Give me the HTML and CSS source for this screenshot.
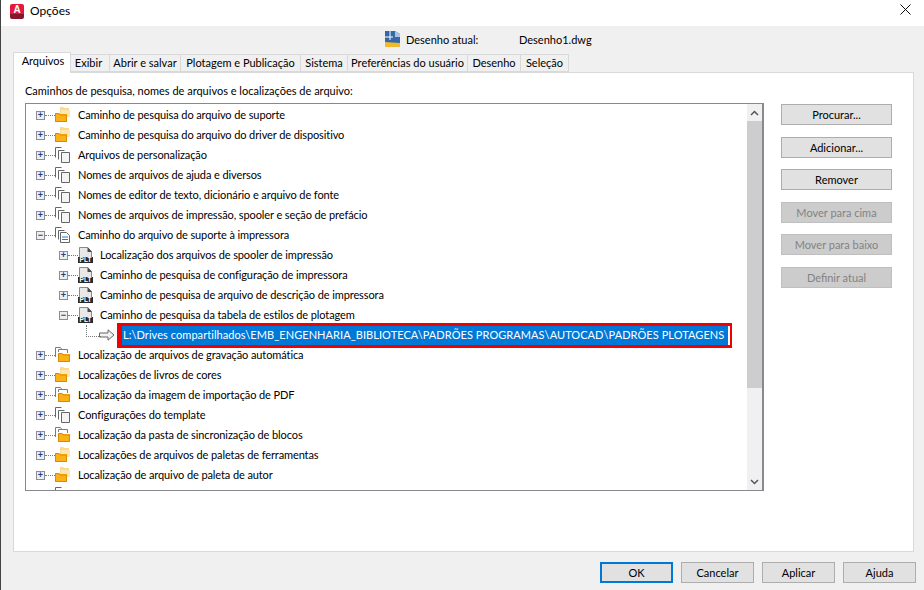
FILE: index.html
```html
<!DOCTYPE html>
<html lang="pt">
<head>
<meta charset="utf-8">
<title>Opções</title>
<link rel="stylesheet" href="styles.css">
</head>
<body>
<svg class="defs" width="0" height="0" aria-hidden="true">
  <symbol id="i-folders" viewBox="0 0 16 16">
    <path d="M5 0h3l1 1h5v8H5z" fill="#fbd98e"/>
    <path d="M6 3h9v7H6z" fill="#fde6b5"/>
    <path d="M0 6h4l1 1h7v8H0z" fill="#fdb119"/>
    <path d="M.5 6.500h3.500l1 1.500h6.500v6.500H.5z" fill="none" stroke="#d98c00"/>
  </symbol>
  <symbol id="i-mixed" viewBox="0 0 16 16">
    <path d="M.5 10V.5h5l1 1.500M.5 .5" fill="none" stroke="#7a7a7a"/>
    <path d="M3.500 5V2.500h9V6" fill="none" stroke="#7a7a7a"/>
    <path d="M3 6h4l1 1h7v8H3z" fill="#fdb119"/>
    <path d="M3.500 6.500h3.500l1 1.500h6.500v6.500h-11z" fill="none" stroke="#d98c00"/>
  </symbol>
  <symbol id="i-pages" viewBox="0 0 16 16">
    <path d="M.5 10.500V.5h6M3.500 12.500V3.500h6" fill="none" stroke="#666"/>
    <path d="M6.500 5.500h8v10h-8z" fill="#f4f4f4" stroke="#666"/>
  </symbol>
  <symbol id="i-pages-doc" viewBox="0 0 16 16">
    <path d="M.5 10.500V.5h6M3.500 12.500V3.500h6" fill="none" stroke="#666"/>
    <path d="M5.500 5.500h6l3 3v7h-9z" fill="#fff" stroke="#666"/>
    <path d="M7 10h6M7 12.500h6" stroke="#1e7fd0"/>
  </symbol>
  <symbol id="i-plt" viewBox="0 0 15 16">
    <path d="M1 0h9l4 4v6H1z" fill="#e8e8e8"/>
    <path d="M1.500 .5h8l4 4V10M1.500 .5V10" fill="none" stroke="#8a8a8a"/>
    <path d="M9.500 0v5H14z" fill="#4a4a4a"/>
    <path d="M0 10h15v6H0z" fill="#2b2b2b"/>
  </symbol>
</svg>
<div class="window">
  <header class="titlebar">
    <span class="app-logo">A</span>
    <span class="title">Opções</span>
    <svg class="close" viewBox="0 0 11 11" width="11" height="11"><path d="M.5 .5l10 10M10.500 .5l-10 10" stroke="#111" fill="none"/></svg>
  </header>
  <div class="current">
    <svg class="dwg-icon" viewBox="0 0 15 16" width="15" height="16">
      <path d="M0 0h10l5 3v13H0z" fill="#3269a6"/>
      <path d="M10 0l5 3v3h-5z" fill="#a9c4e4"/>
      <path d="M0 11l15 1v4H0z" fill="#f2b92b"/>
      <path d="M0 6h8M5 0v9" stroke="#fff"/>
    </svg>
    <span class="current-label">Desenho atual:</span>
    <span class="current-name">Desenho1.dwg</span>
  </div>
  <nav class="tabs">
    <span class="tab active">Arquivos</span>
    <span class="tab t-exibir">Exibir</span>
    <span class="tab t-abrir">Abrir e salvar</span>
    <span class="tab t-plot">Plotagem e Publicação</span>
    <span class="tab t-sis">Sistema</span>
    <span class="tab t-pref">Preferências do usuário</span>
    <span class="tab t-des">Desenho</span>
    <span class="tab t-sel">Seleção</span>
  </nav>
  <main class="panel">
    <p class="caption">Caminhos de pesquisa, nomes de arquivos e localizações de arquivo:</p>
    <div class="content">
      <div class="listbox">
        <ul class="tree">
          <li class="row"><span class="exp">+</span><svg class="ico"><use href="#i-folders"/></svg><span class="txt">Caminho de pesquisa do arquivo de suporte</span></li>
          <li class="row"><span class="exp">+</span><svg class="ico"><use href="#i-folders"/></svg><span class="txt">Caminho de pesquisa do arquivo do driver de dispositivo</span></li>
          <li class="row"><span class="exp">+</span><svg class="ico"><use href="#i-pages"/></svg><span class="txt">Arquivos de personalização</span></li>
          <li class="row"><span class="exp">+</span><svg class="ico"><use href="#i-pages"/></svg><span class="txt">Nomes de arquivos de ajuda e diversos</span></li>
          <li class="row"><span class="exp">+</span><svg class="ico"><use href="#i-pages"/></svg><span class="txt">Nomes de editor de texto, dicionário e arquivo de fonte</span></li>
          <li class="row"><span class="exp">+</span><svg class="ico"><use href="#i-pages"/></svg><span class="txt">Nomes de arquivos de impressão, spooler e seção de prefácio</span></li>
          <li class="row"><span class="exp">−</span><svg class="ico"><use href="#i-pages-doc"/></svg><span class="txt">Caminho do arquivo de suporte à impressora</span></li>
          <li class="row child"><span class="exp">+</span><svg class="ico plt" viewBox="0 0 15 16"><use href="#i-plt"/><text x="7.500" y="15" class="plt-text" text-anchor="middle">PLT</text></svg><span class="txt">Localização dos arquivos de spooler de impressão</span></li>
          <li class="row child"><span class="exp">+</span><svg class="ico plt" viewBox="0 0 15 16"><use href="#i-plt"/><text x="7.500" y="15" class="plt-text" text-anchor="middle">PLT</text></svg><span class="txt">Caminho de pesquisa de configuração de impressora</span></li>
          <li class="row child"><span class="exp">+</span><svg class="ico plt" viewBox="0 0 15 16"><use href="#i-plt"/><text x="7.500" y="15" class="plt-text" text-anchor="middle">PLT</text></svg><span class="txt">Caminho de pesquisa de arquivo de descrição de impressora</span></li>
          <li class="row child"><span class="exp">−</span><svg class="ico plt" viewBox="0 0 15 16"><use href="#i-plt"/><text x="7.500" y="15" class="plt-text" text-anchor="middle">PLT</text></svg><span class="txt">Caminho de pesquisa da tabela de estilos de plotagem</span></li>
          <li class="row leaf">
            <svg class="arrow" viewBox="0 0 16 12" width="16" height="12"><path d="M.5 4h8.500V.8L15 6l-6 5.200V8H.5z" fill="#f2f2f2" stroke="#666"/></svg>
            <span class="selected">L:\Drives compartilhados\EMB_ENGENHARIA_BIBLIOTECA\PADRÕES PROGRAMAS\AUTOCAD\PADRÕES PLOTAGENS</span>
          </li>
          <li class="row"><span class="exp">+</span><svg class="ico"><use href="#i-mixed"/></svg><span class="txt">Localização de arquivos de gravação automática</span></li>
          <li class="row"><span class="exp">+</span><svg class="ico"><use href="#i-folders"/></svg><span class="txt">Localizações de livros de cores</span></li>
          <li class="row"><span class="exp">+</span><svg class="ico"><use href="#i-mixed"/></svg><span class="txt">Localização da imagem de importação de PDF</span></li>
          <li class="row"><span class="exp">+</span><svg class="ico"><use href="#i-pages"/></svg><span class="txt">Configurações do template</span></li>
          <li class="row"><span class="exp">+</span><svg class="ico"><use href="#i-mixed"/></svg><span class="txt">Localização da pasta de sincronização de blocos</span></li>
          <li class="row"><span class="exp">+</span><svg class="ico"><use href="#i-folders"/></svg><span class="txt">Localizações de arquivos de paletas de ferramentas</span></li>
          <li class="row"><span class="exp">+</span><svg class="ico"><use href="#i-folders"/></svg><span class="txt">Localização de arquivo de paleta de autor</span></li>
          <li class="row"><span class="exp"></span><svg class="ico"><use href="#i-pages"/></svg></li>
        </ul>
        <div class="scrollbar">
          <span class="sb-btn"><svg viewBox="0 0 9 6" width="9" height="6"><path d="M1 5l3.500-3.500L8 5" fill="none" stroke="#555" stroke-width="1.500"/></svg></span>
          <span class="sb-thumb"></span>
          <span class="sb-track"></span>
          <span class="sb-btn"><svg viewBox="0 0 9 6" width="9" height="6"><path d="M1 1l3.500 3.500L8 1" fill="none" stroke="#555" stroke-width="1.500"/></svg></span>
        </div>
      </div>
      <aside class="actions">
        <button class="btn side">Procurar...</button>
        <button class="btn side">Adicionar...</button>
        <button class="btn side">Remover</button>
        <button class="btn side off">Mover para cima</button>
        <button class="btn side off">Mover para baixo</button>
        <button class="btn side off">Definir atual</button>
      </aside>
    </div>
  </main>
  <footer class="footer">
    <button class="btn foot default">OK</button>
    <button class="btn foot">Cancelar</button>
    <button class="btn foot">Aplicar</button>
    <button class="btn foot">Ajuda</button>
  </footer>
</div>
</body>
</html>
```
FILE: styles.css
```css
* { box-sizing: border-box; }
html, body { margin: 0; padding: 0; }
body {
  width: 924px;
  height: 590px;
  overflow: hidden;
  font-family: Lato, "Open Sans", sans-serif;
  font-size: 11px;
  color: #000;
  background: #f0f0f0;
}
.defs { position: absolute; }
.plt-text { font: bold 6.500px "Liberation Sans", sans-serif; fill: #fff; }
.window { height: 590px; display: flex; flex-direction: column; border-left: 1px solid #444; }

.titlebar { height: 26px; background: #fff; display: flex; align-items: center; flex: none; }
.app-logo {
  width: 14px; height: 15px; margin-left: 9px; margin-top: -3px;
  background: linear-gradient(#e5173f 0 70%, #85182c 70%);
  border-radius: 2px;
  color: #fff; font: bold 10px/11px "Liberation Sans", sans-serif; text-align: center;
}
.title { margin-left: 6px; margin-top: -5px; font-size: 12px; }
.close { margin-left: auto; margin-right: 13px; margin-top: -8px; }

.current { height: 26px; display: flex; align-items: center; flex: none; padding-left: 384px; }
.current-label { margin-left: 6px; width: 113px; }

.tabs { height: 20px; display: flex; align-items: flex-end; padding-left: 12px; flex: none; position: relative; z-index: 1; }
.tab {
  height: 18px; padding-top: 1px; text-align: center; white-space: nowrap;
  background: #f0f0f0;
  border: 1px solid #d9d9d9; border-left: 0;
}
.tab.active { width: 58px; height: 21px; margin-bottom: -1px; padding: 1px 0 0 2px; background: #fff; border-left: 1px solid #d9d9d9; border-bottom: 0; }
.t-exibir { width: 39px; padding-right: 3px; }
.t-abrir { width: 71px; }
.t-plot { width: 120px; }
.t-sis { width: 47px; }
.t-pref { width: 120px; }
.t-des { width: 53px; }
.t-sel { width: 48px; }

.panel { width: 901px; height: 480px; margin-left: 12px; background: #fff; border: 1px solid #d9d9d9; flex: none; padding: 11px 11px 0; }
.caption { margin: 0; height: 19px; line-height: 14px; }
.content { display: flex; align-items: flex-start; }
.listbox { width: 739px; height: 388px; border: 1px solid #868a8f; border-right-width: 2px; display: flex; overflow: hidden; }

.tree { list-style: none; margin: 0; padding: 1px 0 0; flex: 1; overflow: hidden; height: 386px; background-image: radial-gradient(#777 .6px, transparent .7px); background-size: 2px 2px; background-position: 14px 0; background-repeat: repeat-y; }
.row { height: 20px; display: flex; align-items: center; padding-left: 10px; white-space: nowrap; position: relative; }
.exp {
  width: 9px; height: 9px; flex: none;
  border: 1px solid #8d8d8d; background: #eee;
  color: #1d3f8f; font: bold 9px/7px "Liberation Sans", sans-serif; text-align: center;
  position: relative;
}
.exp::after { content: ""; position: absolute; left: 8px; top: 3px; width: 10px; border-top: 1px dotted #777; }
.ico { width: 16px; height: 16px; margin-left: 10px; flex: none; }
.txt { margin-left: 7px; padding-bottom: 1px; letter-spacing: -0.1px; }
.row.child { padding-left: 33px; background-image: radial-gradient(#777 .6px, transparent .7px); background-size: 2px 2px; background-position: 37px 0; background-repeat: repeat-y; }
.ico.plt { width: 15px; margin-left: 10px; }
.child .txt { margin-left: 7px; }
.row.leaf { padding-left: 73px; }
.row.leaf::before { content: ""; position: absolute; left: 60px; top: 0; width: 14px; height: 11px; border-left: 1px dotted #777; border-bottom: 1px dotted #777; }
.selected {
  margin-left: 2px; height: 25px; width: 615px; flex: none;
  border: solid #f00000; border-width: 3px 2px 3px 5px;
  background: #0078d7; color: #fff;
  line-height: 18px; padding-left: 1px; letter-spacing: 0.06px;
  box-shadow: inset -2px 0 0 #fff;
}

.scrollbar { width: 15px; margin-left: auto; flex: none; display: flex; flex-direction: column; height: 386px; }
.sb-btn { height: 17px; background: #f0f0f0; display: flex; align-items: center; justify-content: center; flex: none; }
.sb-thumb { height: 267px; background: #cdcdcd; flex: none; }
.sb-track { flex: 1; background: #f0f0f0; }

.actions { margin-left: 17px; width: 111px; display: flex; flex-direction: column; gap: 11.6px; padding-top: 1px; flex: none; }
.btn {
  font: inherit; color: #000; padding: 0;
  background: #e1e1e1; border: 1px solid #adadad; border-radius: 0;
}
.btn.side { height: 21px; width: 111px; }
.btn.off { background: #cccccc; border-color: #bfbfbf; color: #838383; }

.footer { display: flex; gap: 8px; padding: 10px 0 0 599px; flex: none; }
.btn.foot { width: 73px; height: 21px; }
.btn.default { border: 2px solid #0078d7; }
```
